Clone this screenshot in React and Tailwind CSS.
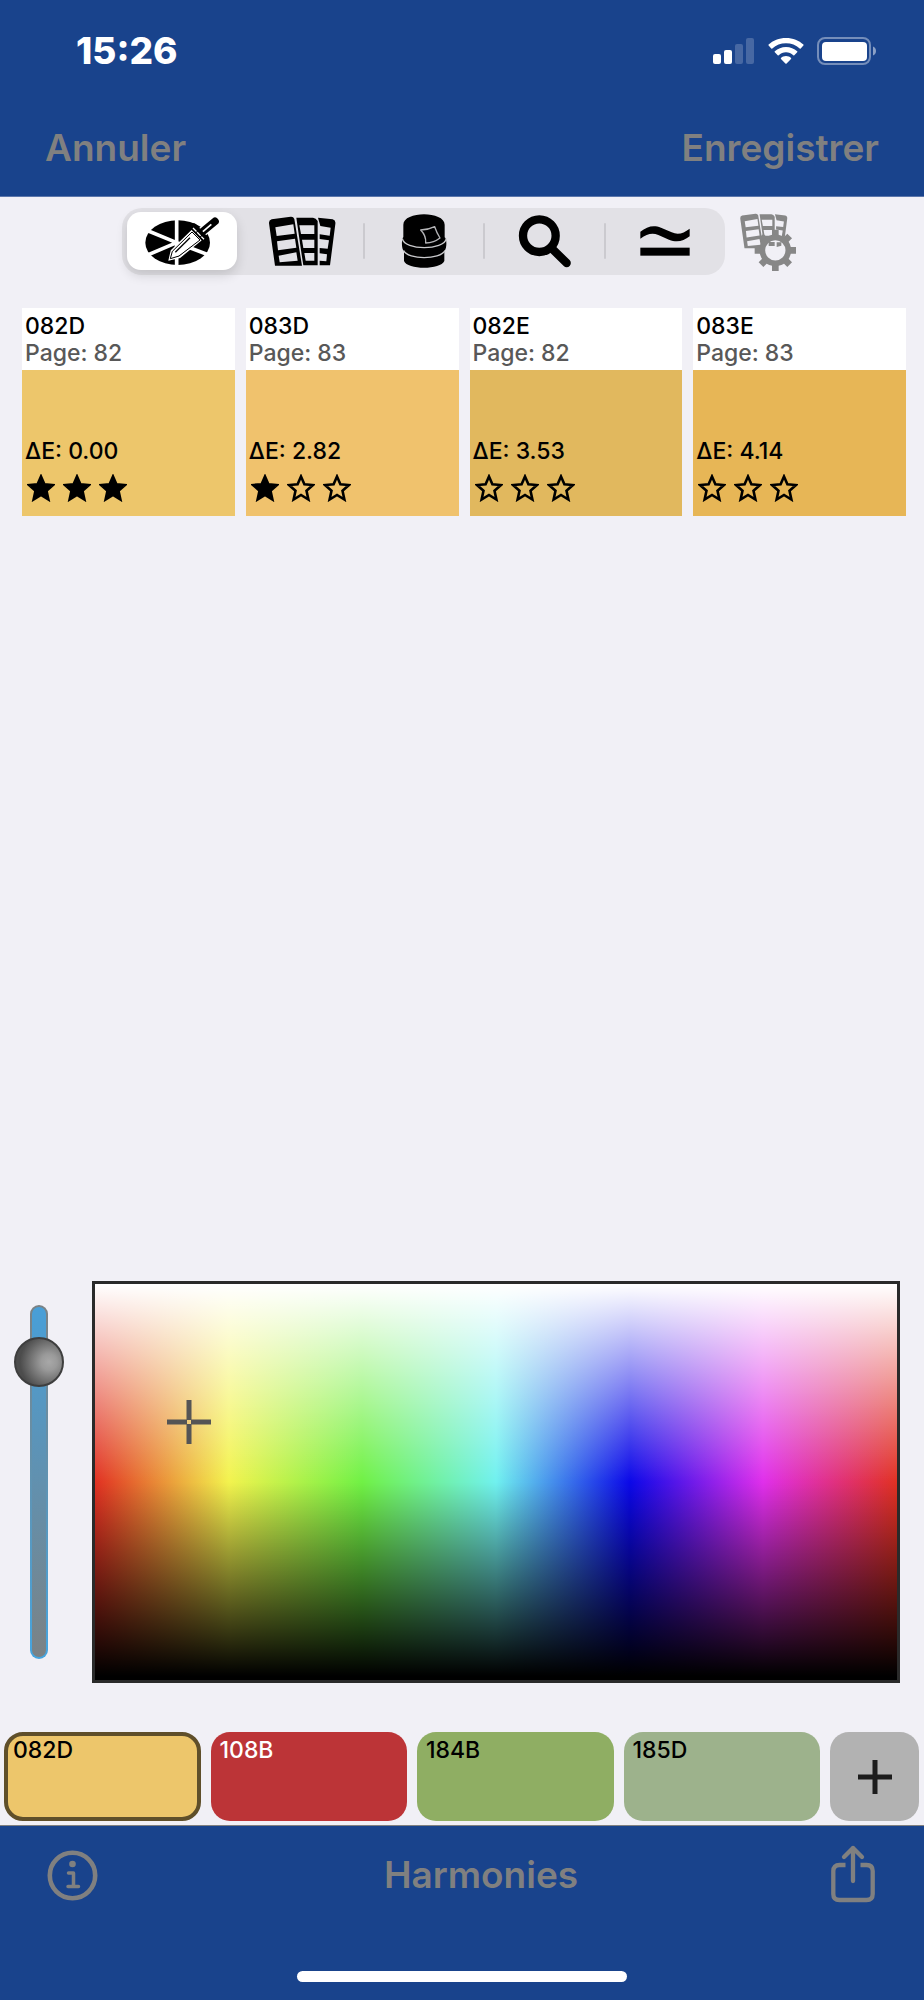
import { useState } from 'react';

const matches = [
  { code: '082D', page: 82, delta: '0.00', stars: 3, color: 'bg-[#edc66b]' },
  { code: '083D', page: 83, delta: '2.82', stars: 1, color: 'bg-[#f0c26d]' },
  { code: '082E', page: 82, delta: '3.53', stars: 0, color: 'bg-[#e1b85e]' },
  { code: '083E', page: 83, delta: '4.14', stars: 0, color: 'bg-[#e7b656]' },
];

const palette = [
  { code: '082D', style: 'bg-[#edc66b] text-black' },
  { code: '108B', style: 'bg-[#bc3437] text-white' },
  { code: '184B', style: 'bg-[#8fae63] text-black' },
  { code: '185D', style: 'bg-[#9db28c] text-black' },
];

const StatusIcons = () => (
  <div className="flex items-center gap-[13px]">
    <svg className="w-[42px] h-[28px]" viewBox="0 0 42 28" fill="white">
      <rect x="0" y="17" width="8" height="10" rx="2" />
      <rect x="11" y="13" width="8" height="14" rx="2" />
      <rect x="22" y="7" width="8" height="20" rx="2" opacity="0.2" />
      <rect x="33" y="1" width="8" height="26" rx="2" opacity="0.2" />
    </svg>
    <svg className="w-[36px] h-[28px]" viewBox="0 0 36 28" fill="white">
      <path d="M18 1C11 1 5 3.500 .6 7.600q-.5.500 0 1L3.300 11.400q.5.500 1 0C8 8 12.700 6.200 18 6.200s10 1.800 13.700 5.200q.5.500 1 0l2.700-2.800q.5-.5 0-1C31 3.500 25 1 18 1z" />
      <path d="M18 10c-4.300 0-8.200 1.600-11.200 4.300q-.5.500 0 1l2.900 2.900q.5.400 1 0c2-1.800 4.500-2.900 7.300-2.900s5.300 1.100 7.300 2.900q.5.400 1 0l2.900-2.900q.5-.5 0-1C26.200 11.600 22.300 10 18 10z" />
      <path d="M18 19c-2 0-3.700.7-5 1.900q-.5.500 0 1l4.400 4.600q.6.600 1.200 0l4.400-4.600q.5-.5 0-1c-1.300-1.200-3-1.900-5-1.900z" />
    </svg>
    <svg className="w-[60px] h-[28px]" viewBox="0 0 60 28">
      <rect x="1" y="1" width="52" height="26" rx="7" fill="none" stroke="white" strokeOpacity="0.4" strokeWidth="2" />
      <rect x="5" y="5" width="45" height="19" rx="4" fill="white" />
      <path d="M56 9.500c2 .8 3 2.500 3 4.500s-1 3.700-3 4.500z" fill="white" opacity="0.5" />
    </svg>
  </div>
);

const WheelIcon = () => (
  <svg className="w-[78px] h-[52px]" viewBox="103 58 234 156">
    <ellipse cx="207" cy="141" rx="97" ry="67" />
    <path d="M204 141V70M204 141V212M204 141L112 103M204 141L112 180M204 141L306 180" stroke="white" strokeWidth="11" />
    <path d="M183 191L189 165L250 106L276 133L213 184Z" stroke="white" strokeWidth="6" />
    <path d="M185 189L191 167L250 109L274 133L211 181Z" fill="white" stroke="black" strokeWidth="3" strokeLinejoin="round" />
    <path d="M200 170L244 126" stroke="black" strokeWidth="4" />
    <path d="M279 110L319 77" stroke="white" strokeWidth="30" strokeLinecap="round" />
    <path d="M279 110L319 77" stroke="black" strokeWidth="23" strokeLinecap="round" />
    <path d="M280 110L308 86" stroke="white" strokeWidth="5" />
    <path d="M255 94L290 131" stroke="black" strokeWidth="21" strokeLinecap="round" />
    <path d="M253 97L286 131" stroke="white" strokeWidth="4" strokeDasharray="15 3" />
  </svg>
);

const DeckShape = () => (
  <g fillRule="evenodd">
    <path d="M477 92q-1-9 8-12l57-8q8-1 11 7l23 140h-81zM496 104l4 26 54-7-4-28zM501 146l3 27 55-8-4-27zM506 189l3 20 54-5-4-25z" />
    <path d="M559 75h50q9 1 14 10v133h-43l-5-32zM568 98l5 26h40V98zM576 141l4 25h33v-25zM583 181l4 23h26v-23z" />
    <path d="M624 75l44 5q10 3 8 14l-16 124h-31v-14l20 2 2-21-22-3v-16l24 2 4-25-28-4v-14l30 4 3-24-31-5z" />
  </g>
);

const DeckIcon = () => (
  <svg className="w-[68px] h-[52px]" viewBox="474 67 204 156">
    <DeckShape />
  </svg>
);

const CanIcon = () => (
  <svg className="w-[46px] h-[56px]" viewBox="871 53 138 168" strokeLinejoin="round">
    <path d="M878 88c0-42 124-42 124 0v38c7 3 7 35-1 41v30c-10 27-112 27-121 0v-30c-8-5-8-36-2-42z" />
    <path d="M875 130c6 36 125 36 132 0M879 166c14 28 108 28 124 0" fill="none" stroke="#c9c9cc" strokeWidth="4" />
    <path d="M930 104q22 0 42-10q6 18 16 34q-18 14-43 15q2-22-15-39z" fill="none" stroke="#b5b5b8" strokeWidth="4" />
  </svg>
);

const SearchIcon = () => (
  <svg className="w-[54px] h-[54px]" viewBox="169 56 162 162" fill="none" stroke="black" strokeWidth="25" strokeLinecap="round">
    <circle cx="233" cy="121" r="49" />
    <path d="M272 161L315 203" />
  </svg>
);

const SimilarIcon = () => (
  <svg className="w-[50px] h-[32px]" viewBox="541 88 150 96">
    <path d="M542 108C562 93 580 87 604 96L636 110C656 119 672 112 690 99V122C672 136 652 142 628 132L596 118C576 110 562 116 542 129Z" />
    <rect x="542" y="156" width="148" height="24" />
  </svg>
);

const DeckSettingsIcon = () => (
  <svg className="w-[58px] h-[60px]" viewBox="839 58 174 180" fill="#878787">
    <g transform="translate(505 12) scale(.708)">
      <DeckShape />
    </g>
    <circle cx="948" cy="173" r="32" fill="#f1f0f6" />
    <path d="M928 160v-12h18v12zM952 163v-14h14v10z" />
    <g stroke="#878787" strokeWidth="20">
      <path d="M948 133V111M948 213V235M908 173H886M988 173H1010M920 145L905 130M976 145L991 130M920 201L905 216M976 201L991 216" />
    </g>
    <circle cx="948" cy="173" r="39" fill="none" stroke="#878787" strokeWidth="17" />
  </svg>
);

const Star = ({ filled }) => (
  <svg className="w-[28px] h-[28px]" viewBox="0 0 28 28">
    <path
      d="M14 2.500L17.400 10.200L26 11L19.500 16.700L21.400 25.500L14 21L6.600 25.500L8.500 16.700L2 11L10.600 10.200Z"
      fill={filled ? 'black' : 'none'}
      stroke="black"
      strokeWidth="2.600"
    />
  </svg>
);

const tabs = [
  { id: 'picker', label: 'Couleurs', Icon: WheelIcon },
  { id: 'deck', label: 'Nuancier', Icon: DeckIcon },
  { id: 'paint', label: 'Peinture', Icon: CanIcon },
  { id: 'search', label: 'Rechercher', Icon: SearchIcon },
  { id: 'similar', label: 'Similaires', Icon: SimilarIcon },
];

const MatchCard = ({ match }) => (
  <article className="flex-1 bg-white text-[23px] leading-[27px] font-medium">
    <div className="h-[62px] pt-[5px] px-[3px]">
      <h2>{match.code}</h2>
      <p className="text-[#585858]">Page: {match.page}</p>
    </div>
    <div className={`h-[146px] pt-[68px] px-[3px] ${match.color}`}>
      <p>ΔE: {match.delta}</p>
      <div className="flex gap-2 mt-[9px] pl-[2px]">
        {[0, 1, 2].map((i) => (
          <Star key={i} filled={i < match.stars} />
        ))}
      </div>
    </div>
  </article>
);

const App = () => {
  const [tab, setTab] = useState('picker');
  const [selected, setSelected] = useState('082D');
  const [level, setLevel] = useState(20);

  return (
    <div className="min-h-screen flex flex-col bg-[#f1f0f6] text-black font-['Inter',sans-serif]">
      <header className="h-[197px] bg-[#19438c] border-b border-[#5b76ab]">
        <div className="flex items-center justify-between pt-[30px] pl-[76px] pr-[47px]">
          <span className="text-[37px] leading-[42px] font-extrabold text-white">15:26</span>
          <StatusIcons />
        </div>
        <div className="flex items-center justify-between pt-[54px] px-[45px] text-[37px] leading-[44px] font-semibold text-[#808080]">
          <button type="button">Annuler</button>
          <button type="button">Enregistrer</button>
        </div>
      </header>

      <main className="flex-1 flex flex-col">
        <div className="flex items-center justify-center gap-[14px] pt-[11px] pr-[6px]">
          <div className="flex items-center w-[603px] h-[67px] pb-[2px] rounded-[20px] bg-[#e2e1e6]">
            {tabs.map(({ id, label, Icon }, i) => (
              <div key={id} className="flex-1 h-full flex items-center">
                {i > 1 && <span className="w-[2px] h-[36px] rounded-full bg-[#cbcacf]" />}
                <button
                  type="button"
                  aria-label={label}
                  onClick={() => setTab(id)}
                  className={`flex-1 h-[58px] mx-[5px] rounded-[14px] flex items-center justify-center ${
                    tab === id ? 'bg-white shadow-[0_5px_12px_rgba(0,0,0,0.14)]' : ''
                  }`}
                >
                  <Icon />
                </button>
              </div>
            ))}
          </div>
          <button type="button" aria-label="Réglages du nuancier">
            <DeckSettingsIcon />
          </button>
        </div>

        <section className="flex gap-[11px] mt-[33px] pl-[22px] pr-[18px]">
          {matches.map((match) => (
            <MatchCard key={match.code} match={match} />
          ))}
        </section>

        <section className="flex items-center gap-[28px] mt-auto pl-[14px] pr-[24px]">
          <input
            type="range"
            aria-label="Intensité"
            min="0"
            max="200"
            value={level}
            onChange={(e) => setLevel(Number(e.target.value))}
            className="w-[50px] h-[354px] appearance-none bg-transparent [writing-mode:vertical-lr] [&::-webkit-slider-runnable-track]:w-[18px] [&::-webkit-slider-runnable-track]:rounded-full [&::-webkit-slider-runnable-track]:border-2 [&::-webkit-slider-runnable-track]:border-transparent [&::-webkit-slider-runnable-track]:[background:linear-gradient(#489fd8,#7b8285)_padding-box,linear-gradient(#7b8285,#45a5e0)_border-box] [&::-webkit-slider-thumb]:appearance-none [&::-webkit-slider-thumb]:w-[50px] [&::-webkit-slider-thumb]:h-[50px] [&::-webkit-slider-thumb]:-ml-[18px] [&::-webkit-slider-thumb]:rounded-full [&::-webkit-slider-thumb]:border-2 [&::-webkit-slider-thumb]:border-[#3e3e3e] [&::-webkit-slider-thumb]:bg-[radial-gradient(circle_at_72%_50%,#a8a8a8_0%,#9a9a9a_20%,#4c4c4c_72%)]"
          />
          <div className="relative flex-1 h-[402px] border-[3px] border-[#2a2a2a] bg-[linear-gradient(to_bottom,white_0%,rgba(255,255,255,0)_50%,rgba(0,0,0,0)_50%,black_99%),linear-gradient(to_right,#e13122,#f3f34e_16.7%,#70f145_33.3%,#70f1ef_50%,#0b08e8_66.7%,#e02feb_83.3%,#e13122)]">
            <svg className="absolute left-[11.700%] top-[34.800%] w-[46px] h-[46px] -translate-x-1/2 -translate-y-1/2" viewBox="0 0 46 46" stroke="#555" strokeWidth="5">
              <path d="M1 23H21M25 23H45M23 1V21M23 25V45" />
            </svg>
          </div>
        </section>

        <section className="flex gap-[10px] mt-[49px] mb-1 pl-1 pr-[5px]">
          {palette.map(({ code, style }) => (
            <button
              key={code}
              type="button"
              onClick={() => setSelected(code)}
              className={`flex-1 h-[89px] rounded-[19px] border-4 flex items-start px-[5px] text-[23px] leading-[27px] font-medium ${style} ${
                selected === code ? 'border-[#5f4f2a]' : 'border-transparent'
              }`}
            >
              <span className="mt-[1px]">{code}</span>
            </button>
          ))}
          <button type="button" aria-label="Ajouter" className="w-[89px] h-[89px] rounded-[19px] bg-[#b2b2b2] flex items-center justify-center">
            <svg className="w-[34px] h-[34px]" viewBox="0 0 34 34" stroke="#1c1c1c" strokeWidth="5">
              <path d="M17 0V34M0 17H34" />
            </svg>
          </button>
        </section>
      </main>

      <footer className="h-[175px] flex flex-col items-center bg-[#19438c] border-t border-[#808080]">
        <div className="w-full flex items-center justify-between pt-[16px] pl-[47px] pr-[48px] text-[#808080]">
          <button type="button" aria-label="Informations">
            <svg className="w-[51px] h-[51px]" viewBox="0 0 51 51" fill="none" stroke="currentColor" strokeLinecap="round" strokeLinejoin="round">
              <circle cx="25.500" cy="25.500" r="22.700" strokeWidth="4.600" />
              <circle cx="25.500" cy="14" r="3.300" fill="currentColor" stroke="none" />
              <path d="M21.500 23H26.500V36.500M21 36.500H31.500" strokeWidth="3.500" />
            </svg>
          </button>
          <button type="button" className="pl-[34px] text-[37px] leading-[44px] font-semibold">Harmonies</button>
          <button type="button" aria-label="Partager">
            <svg className="w-[46px] h-[66px]" viewBox="0 0 46 66" fill="none" stroke="currentColor" strokeWidth="4.300">
              <path d="M15.500 23H9.500Q3.300 23 3.300 29V52Q3.300 58 9.500 58H36.500Q42.700 58 42.700 52V29Q42.700 23 36.500 23H30.500" />
              <path d="M23 39V6M14 15L23 6L32 15" strokeLinecap="round" strokeLinejoin="round" />
            </svg>
          </button>
        </div>
        <div className="w-[330px] h-[11px] mt-auto mb-[18px] rounded-full bg-white" />
      </footer>
    </div>
  );
};

export default App;
